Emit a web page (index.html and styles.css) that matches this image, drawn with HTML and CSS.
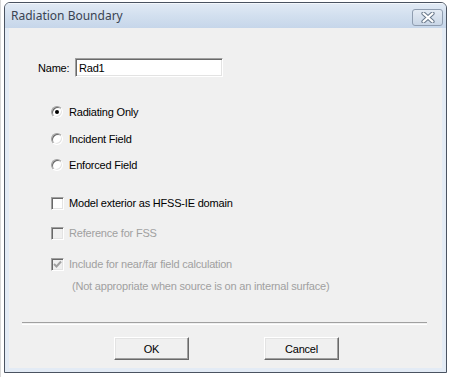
FILE: index.html
```html
<!DOCTYPE html>
<html>
<head>
<meta charset="utf-8">
<link rel="stylesheet" href="styles.css">
</head>
<body>
<div class="desk">
  <div class="win">
    <div class="titlebar">
      <span class="title-text">Radiation Boundary</span>
      <div class="close">
        <svg width="16" height="11" viewBox="0 0 16 11">
          <path d="M3.5 1.5 L12.5 9.5 M12.5 1.5 L3.5 9.5" stroke="#6b7a8c" stroke-width="4.2" stroke-linecap="round" fill="none"/>
          <path d="M3.5 1.5 L12.5 9.5 M12.5 1.5 L3.5 9.5" stroke="#ffffff" stroke-width="2.2" stroke-linecap="round" fill="none"/>
        </svg>
      </div>
    </div>
    <div class="frame">
      <div class="client">
        <div class="name-row">
          <span class="label">Name:</span>
          <div class="textbox">Rad1</div>
        </div>

        <div class="opt r1"><span class="radio on"></span><span>Radiating Only</span></div>
        <div class="opt r2"><span class="radio"></span><span>Incident Field</span></div>
        <div class="opt r3"><span class="radio"></span><span>Enforced Field</span></div>

        <div class="opt c1"><span class="check"></span><span>Model exterior as HFSS-IE domain</span></div>
        <div class="opt c2 disabled"><span class="check dis"></span><span>Reference for FSS</span></div>
        <div class="opt c3 disabled"><span class="check dis">
          <svg width="9" height="9" viewBox="0 0 9 9"><path d="M1 4 L3.5 6.5 L8 1.5" stroke="#a0a0a0" stroke-width="2" fill="none"/></svg>
        </span><span>Include for near/far field calculation</span></div>
        <div class="note disabled">(Not appropriate when source is on an internal surface)</div>

        <div class="sep"></div>

        <div class="buttons">
          <div class="btn">OK</div>
          <div class="btn">Cancel</div>
        </div>
      </div>
    </div>
  </div>
</div>
</body>
</html>
```

FILE: styles.css
```css
html, body {
  margin: 0;
  padding: 0;
  background: #ffffff;
}
.desk {
  width: 449px;
  height: 377px;
  padding: 2px 0 0 4px;
  box-sizing: border-box;
  background: linear-gradient(to right, #d8d8d8 0, #d8d8d8 1px, #ffffff 1px);
}
.win {
  width: 443px;
  height: 371px;
  box-sizing: border-box;
  border: 1px solid #4a5361;
  border-radius: 6px 6px 0 0;
  background: #e3ebf5;
  display: flex;
  flex-direction: column;
  overflow: hidden;
  font-family: "Liberation Sans", Arial, sans-serif;
  font-size: 11px;
  letter-spacing: -0.2px;
  color: #000;
}
.titlebar {
  height: 25px;
  flex: none;
  display: flex;
  align-items: center;
  justify-content: space-between;
  padding: 0 3px 0 6px;
  background: linear-gradient(to bottom, #e1eaf5 0%, #d3e0ef 45%, #c6d6ea 100%);
  border-top: 1px solid #f4f8fc;
  box-sizing: border-box;
  letter-spacing: 0;
}
.title-text {
  font-family: "Noto Sans", "DejaVu Sans", sans-serif;
  font-size: 12px;
  color: #3a4452;
  margin-top: -1px;
}
.close {
  width: 29px;
  height: 15px;
  border: 1px solid #8f9db0;
  border-radius: 3px;
  background: linear-gradient(to bottom, #e4ebf4, #c9d6e6);
  display: flex;
  align-items: center;
  justify-content: center;
  margin-top: 5px;
  align-self: flex-start;
}
.close svg { display: block; }
.frame {
  flex: 1;
  padding: 0 4px 4px 4px;
  display: flex;
}
.client {
  flex: 1;
  background: #f0f0f0;
  display: flex;
  flex-direction: column;
  position: relative;
}
.name-row {
  display: flex;
  align-items: center;
  margin-top: 30px;
  margin-left: 29px;
  height: 19px;
}
.label { width: 37px; }
.textbox {
  width: 148px;
  height: 19px;
  box-sizing: border-box;
  background: #fff;
  border: 1px solid;
  border-color: #a0a0a0 #ffffff #ffffff #a0a0a0;
  box-shadow: inset 1px 1px 0 #696969, inset -1px -1px 0 #e3e3e3;
  padding: 2px 0 0 3px;
  line-height: 14px;
}
.opt {
  display: flex;
  align-items: center;
  height: 16px;
  margin-left: 42px;
}
.r1 { margin-top: 27px; }
.r2 { margin-top: 11px; }
.r3 { margin-top: 10px; }
.c1 { margin-top: 22px; }
.c2 { margin-top: 14px; }
.c3 { margin-top: 15px; }
.radio {
  width: 12px;
  height: 12px;
  box-sizing: border-box;
  border-radius: 50%;
  border: 1px solid;
  border-color: #a0a0a0 #ffffff #ffffff #a0a0a0;
  box-shadow: inset 1px 1px 0 #696969, inset -1px -1px 0 #e3e3e3;
  background: #fff;
  margin-right: 6px;
  display: flex;
  align-items: center;
  justify-content: center;
}
.radio.on::after {
  content: "";
  width: 4px;
  height: 4px;
  border-radius: 50%;
  background: #000;
}
.check {
  width: 13px;
  height: 13px;
  box-sizing: border-box;
  border: 1px solid;
  border-color: #a0a0a0 #ffffff #ffffff #a0a0a0;
  box-shadow: inset 1px 1px 0 #696969, inset -1px -1px 0 #e3e3e3;
  background: #fff;
  margin-right: 5px;
  display: flex;
  align-items: center;
  justify-content: center;
}
.check.dis { background: #f0f0f0; }
.check svg { display: block; }
.disabled { color: #a0a0a0; }
.note {
  margin-left: 63px;
  margin-top: 6px;
  height: 16px;
  line-height: 16px;
}
.sep {
  margin: 28px 15px 0 13px;
  height: 1px;
  border-top: 1px solid #a0a0a0;
  border-bottom: 1px solid #ffffff;
}
.buttons {
  display: flex;
  gap: 75px;
  margin-top: 12px;
  margin-left: 105px;
}
.btn {
  width: 75px;
  height: 23px;
  box-sizing: border-box;
  border: 1px solid;
  border-color: #ffffff #696969 #696969 #ffffff;
  box-shadow: inset -1px -1px 0 #a0a0a0, inset 1px 1px 0 #e3e3e3;
  background: #f0f0f0;
  display: flex;
  align-items: center;
  justify-content: center;
}
```
